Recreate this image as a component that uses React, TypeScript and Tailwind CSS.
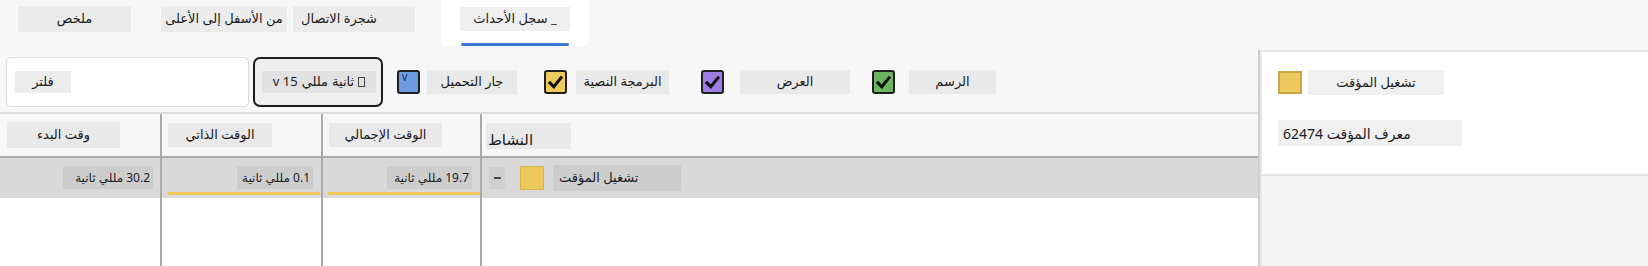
import React from 'react';

// Small black check mark used inside the category checkboxes
const Check = () => (
  <svg viewBox="0 0 20 20" className="w-[17px] h-[17px]">
    <path d="M3.5 10.5 L8 15 L16.5 4.5" fill="none" stroke="#111" strokeWidth="3.6" strokeLinecap="square" strokeLinejoin="miter" />
  </svg>
);

const Ar = ({ children, className = '' }: { children: React.ReactNode; className?: string }) => (
  <span dir="rtl" className={`whitespace-nowrap ${className}`}>{children}</span>
);

export default function App() {
  return (
    <div className="font-['Noto_Sans','DejaVu_Sans',sans-serif] w-[1648px] h-[266px] overflow-hidden bg-[#f7f7f7] text-[#1b1b1b] flex flex-col">
      {/* Tabs */}
      <div className="h-[50px] shrink-0 flex items-start text-[13px]">
        <div className="ml-[18px] mt-[6px] w-[113px] h-[26px] bg-[#ebebeb] flex items-center justify-center">
          <Ar>ملخص</Ar>
        </div>
        <div className="ml-[30px] mt-[6px] w-[126px] h-[26px] bg-[#ebebeb] flex items-center justify-center">
          <Ar>من الأسفل إلى الأعلى</Ar>
        </div>
        <div className="ml-[6px] mt-[6px] w-[122px] h-[26px] bg-[#ebebeb] flex items-center justify-start pl-[8px]">
          <Ar>شجرة الاتصال</Ar>
        </div>
        <div className="ml-[26px] w-[148px] h-[46px] bg-white rounded-b-[5px] flex flex-col items-center justify-between">
          <div className="mt-[7px] w-[110px] h-[24px] bg-[#efefef] flex items-center justify-center">
            <Ar>_ سجل الأحداث</Ar>
          </div>
          <div className="w-[108px] h-[3px] bg-[#3b78d8] rounded-full" />
        </div>
      </div>

      <div className="flex flex-1 min-h-0">
        {/* Main area */}
        <div className="w-[1260px] shrink-0 flex flex-col border-r-2 border-[#cfcfcf]">
          {/* Filter row */}
          <div className="h-[62px] shrink-0 flex items-start pt-[7px] text-[13px]">
            <div className="ml-[6px] w-[243px] h-[50px] bg-white border border-[#dcdcdc] rounded-[5px] flex items-center pl-[8px]">
              <div className="w-[56px] h-[22px] bg-[#ececec] flex items-center justify-center">
                <Ar>فلتر</Ar>
              </div>
            </div>
            <div className="ml-[4px] w-[130px] h-[50px] bg-[#efefef] border-2 border-[#1f1f1f] rounded-[7px] flex items-center">
              <div className="ml-[7px] w-[114px] h-[22px] bg-[#e1e1e1] flex items-center justify-center gap-[4px]">
                <span>v 15</span>
                <Ar>مللي</Ar>
                <Ar>ثانية</Ar>
                <span className="inline-block w-[7px] h-[10px] border border-[#444]" />
              </div>
            </div>

            <div className="h-[50px] flex items-center">
              <div className="ml-[14px] w-[23px] h-[24px] bg-[#6d9be0] border-2 border-[#1f1f1f] rounded-[3px] relative">
                <span className="absolute left-[3px] top-[1px] text-[9px] leading-none text-[#13204a]">V</span>
              </div>
              <div className="ml-[7px] w-[90px] h-[24px] bg-[#e9e9e9] flex items-center justify-center">
                <Ar>جار التحميل</Ar>
              </div>

              <div className="ml-[27px] w-[23px] h-[24px] bg-[#edc95e] border-2 border-[#1f1f1f] rounded-[3px] flex items-center justify-center">
                <Check />
              </div>
              <div className="ml-[9px] w-[93px] h-[24px] bg-[#e9e9e9] flex items-center justify-center">
                <Ar>البرمجة النصية</Ar>
              </div>

              <div className="ml-[32px] w-[23px] h-[24px] bg-[#9d7de3] border-2 border-[#1f1f1f] rounded-[3px] flex items-center justify-center">
                <Check />
              </div>
              <div className="ml-[16px] w-[110px] h-[24px] bg-[#e9e9e9] flex items-center justify-center">
                <Ar>العرض</Ar>
              </div>

              <div className="ml-[22px] w-[23px] h-[24px] bg-[#6db462] border-2 border-[#1f1f1f] rounded-[3px] flex items-center justify-center">
                <Check />
              </div>
              <div className="ml-[14px] w-[87px] h-[24px] bg-[#e9e9e9] flex items-center justify-center">
                <Ar>الرسم</Ar>
              </div>
            </div>
          </div>

          {/* Table */}
          <div className="flex-1 flex border-t-2 border-[#dcdcdc] text-[13px]">
            {/* Start time */}
            <div className="w-[162px] shrink-0 flex flex-col border-r-2 border-[#a9a9a9]">
              <div className="h-[44px] shrink-0 bg-[#f7f7f7] border-b-2 border-[#ababab] pt-[8px] pl-[7px]">
                <div className="w-[113px] h-[26px] bg-[#e9e9e9] flex items-center justify-center">
                  <Ar>وقت البدء</Ar>
                </div>
              </div>
              <div className="h-[40px] shrink-0 bg-[#d9d9d9] flex justify-end pt-[8px] pr-[7px] text-[12px]">
                <div className="w-[90px] h-[23px] bg-[#cdcdcd] flex items-center justify-end pr-[3px]">
                  <Ar>30.2 مللي ثانية</Ar>
                </div>
              </div>
              <div className="flex-1 bg-white" />
            </div>

            {/* Self time */}
            <div className="w-[161px] shrink-0 flex flex-col border-r-2 border-[#a9a9a9]">
              <div className="h-[44px] shrink-0 bg-[#f7f7f7] border-b-2 border-[#ababab] pt-[9px] pl-[6px]">
                <div className="w-[104px] h-[24px] bg-[#e9e9e9] flex items-center justify-center">
                  <Ar>الوقت الذاتي</Ar>
                </div>
              </div>
              <div className="h-[40px] shrink-0 bg-[#d9d9d9] flex flex-col text-[12px]">
                <div className="flex justify-end pt-[8px] pr-[8px]">
                  <div className="w-[76px] h-[23px] bg-[#cdcdcd] flex items-center justify-end pr-[3px]">
                    <Ar>0.1 مللي ثانية</Ar>
                  </div>
                </div>
                <div className="mt-[3px] ml-[6px] mr-[1px] h-[3px] bg-[#ecc659]" />
              </div>
              <div className="flex-1 bg-white" />
            </div>

            {/* Total time */}
            <div className="w-[159px] shrink-0 flex flex-col border-r-2 border-[#a9a9a9]">
              <div className="h-[44px] shrink-0 bg-[#f7f7f7] border-b-2 border-[#ababab] pt-[9px] pl-[6px]">
                <div className="w-[113px] h-[24px] bg-[#e9e9e9] flex items-center justify-center">
                  <Ar>الوقت الإجمالي</Ar>
                </div>
              </div>
              <div className="h-[40px] shrink-0 bg-[#d9d9d9] flex flex-col text-[12px]">
                <div className="flex justify-end pt-[8px] pr-[8px]">
                  <div className="w-[85px] h-[23px] bg-[#cdcdcd] flex items-center justify-end pr-[3px]">
                    <Ar>19.7 مللي ثانية</Ar>
                  </div>
                </div>
                <div className="mt-[3px] ml-[5px] h-[3px] bg-[#ecc659]" />
              </div>
              <div className="flex-1 bg-white" />
            </div>

            {/* Activity */}
            <div className="flex-1 flex flex-col">
              <div className="h-[44px] shrink-0 bg-[#f7f7f7] border-b-2 border-[#ababab] pt-[9px] pl-[4px]">
                <div className="w-[85px] h-[26px] bg-[#e9e9e9] flex items-end pl-[2px] text-[15px] leading-[20px]">
                  <Ar>النشاط</Ar>
                </div>
              </div>
              <div className="h-[40px] shrink-0 bg-[#d9d9d9] flex items-center">
                <div className="ml-[7px] w-[16px] h-[22px] bg-[#cfcfcf] flex items-center justify-center">
                  <span className="block w-[7px] h-[2px] bg-[#444]" />
                </div>
                <div className="ml-[15px] w-[24px] h-[24px] bg-[#edc95e] border border-[#d9b34c]" />
                <div className="ml-[9px] w-[128px] h-[26px] bg-[#cdcdcd] flex items-center pl-[6px]">
                  <Ar>تشغيل المؤقت</Ar>
                </div>
              </div>
              <div className="flex-1 bg-white" />
            </div>
          </div>
        </div>

        {/* Details panel */}
        <div className="flex-1 flex flex-col bg-white border-l-2 border-t-2 border-[#e6e6e6]">
          <div className="h-[122px] shrink-0 flex flex-col pl-[16px] text-[13px]">
            <div className="mt-[18px] flex items-center">
              <div className="w-[24px] h-[23px] bg-[#edc95e] border-2 border-[#c9a545]" />
              <div className="ml-[6px] w-[136px] h-[25px] bg-[#f0f0f0] flex items-center justify-center">
                <Ar>تشغيل المؤقت</Ar>
              </div>
            </div>
            <div className="mt-[25px] w-[184px] h-[26px] bg-[#f0f0f0] flex items-center pl-[5px] text-[14px]">
              <Ar>معرف المؤقت 62474</Ar>
            </div>
          </div>
          <div className="flex-1 bg-[#f5f5f5] border-t-2 border-[#e2e2e2]" />
        </div>
      </div>
    </div>
  );
}
